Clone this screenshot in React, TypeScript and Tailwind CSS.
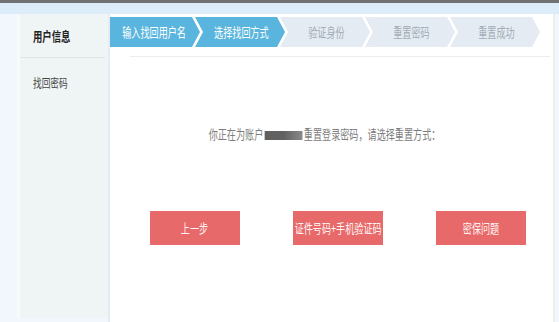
import React from "react";

const steps = [
  { label: "输入找回用户名", active: true },
  { label: "选择找回方式", active: true },
  { label: "验证身份", active: false },
  { label: "重置密码", active: false },
  { label: "重置成功", active: false },
];

function Step({ label, active, first }: { label: string; active: boolean; first: boolean }) {
  return (
    <div
      className={`relative flex h-[30px] w-[90px] shrink-0 items-center justify-center ${
        first ? "" : "-ml-[5px]"
      } ${active ? "bg-[#5ab5de] text-white" : "bg-[#e4ebf2] text-[#a3adb7]"} ${
        first
          ? "[clip-path:polygon(0_0,82px_0,90px_50%,82px_100%,0_100%)]"
          : "[clip-path:polygon(0_0,82px_0,90px_50%,82px_100%,0_100%,8px_50%)]"
      }`}
    >
      <span className={`inline-block scale-x-[0.7] whitespace-nowrap text-[13px] ${first ? "pr-[4px]" : "pl-[4px]"}`}>
        {label}
      </span>
    </div>
  );
}

export default function App() {
  return (
    <div className="h-[322px] w-[559px] overflow-hidden bg-[#f1f7fd] font-['Noto_Sans_CJK_SC',sans-serif]">
      {/* top strips */}
      <div className="h-[3px] bg-[#717171]" />
      <div className="h-[11px] bg-[#dcedf9]" />

      <div className="flex h-[308px] pl-[17px]">
        {/* sidebar */}
        <div className="flex h-[304px] w-[91px] border-l-[3px] border-[#f8fafa] bg-[#eff5f5] pr-[3px]">
          <div className="flex-1">
            <div className="flex h-[44px] items-center border-b border-[#e1e5e6] pl-[13px]">
              <span className="inline-block origin-left scale-x-[0.72] whitespace-nowrap text-[13px] font-bold text-[#222]">
                用户信息
              </span>
            </div>
            <div className="flex h-[50px] items-center pl-[13px]">
              <span className="inline-block origin-left scale-x-[0.72] whitespace-nowrap text-[12px] text-[#444]">
                找回密码
              </span>
            </div>
          </div>
        </div>
        <div className="w-[2px] bg-[#e6eaf7]" />

        {/* main */}
        <div className="mr-[4px] flex-1 border-r-[2px] border-[#ececec] bg-white">
          <div className="mt-[3px] flex">
            {steps.map((s, i) => (
              <Step key={s.label} label={s.label} active={s.active} first={i === 0} />
            ))}
          </div>
          <div className="ml-[20px] mr-[3px] mt-[9px] h-px bg-[#ececec]" />

          <div className="mt-[67px] flex items-center justify-center pr-[14px] text-[13px] text-[#7c7c7c]">
            <span className="inline-block scale-x-[0.7] whitespace-nowrap">
              你正在为账户
              <span className="mx-[2px] inline-block h-[9px] w-[54px] bg-gradient-to-r from-[#5f5f5f] via-[#626262] to-[#8a8a8a] align-middle" />
              重置登录密码，请选择重置方式：
            </span>
          </div>

          <div className="mt-[67px] flex gap-[53px] pl-[40px]">
            {["上一步", "证件号码+手机验证码", "密保问题"].map((t) => (
              <button
                key={t}
                className="flex h-[34px] w-[90px] items-center justify-center bg-[#e8696a] text-[13px] text-[#fff4f4]"
              >
                <span className="inline-block scale-x-[0.7] whitespace-nowrap">{t}</span>
              </button>
            ))}
          </div>
        </div>
      </div>
    </div>
  );
}
